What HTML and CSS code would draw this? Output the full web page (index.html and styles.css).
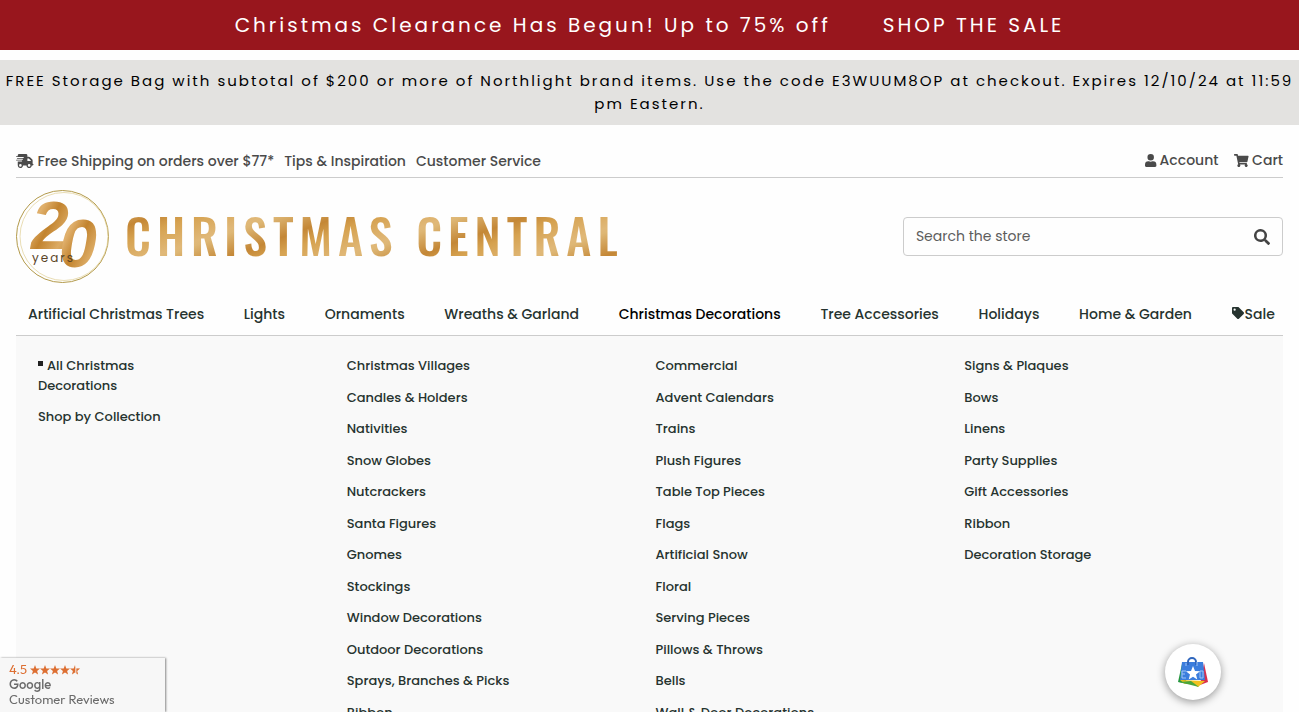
FILE: index.html
```html
<!DOCTYPE html>
<html lang="en">
  <head>
    <meta charset="UTF-8" />
    <meta name="viewport" content="width=device-width, initial-scale=1.0" />
    <title>Christmas Central</title>
    <link rel="stylesheet" href="styles.css">
  </head>
  <body>
    <div class="saleBanner">
      <span>Christmas Clearance Has Begun! Up to 75% off</span>
      <a href="#">SHOP THE SALE</a>
    </div>
    <div class="promoBanner">
      <p>FREE Storage Bag with subtotal of $200 or more of Northlight brand items. Use the code E3WUUM8OP at checkout. Expires 12/10/24 at 11:59 pm Eastern.</p>
    </div>
    <div class="container">
      <div class="topBar">
        <ul class="topLinks">
          <li>
            <a href="#">
              <svg class="truck" viewBox="0 0 640 512" fill="currentColor" aria-hidden="true">
                <path d="M112 0C86 0 64 22 64 48v32H16c-21 0-21 32 0 32h256c21 0 21 32 0 32H48c-21 0-21 32 0 32h192c21 0 21 32 0 32H16c-21 0-21 32 0 32h192c21 0 21 32 0 32H64v128c0 62 43 112 96 112s96-43 96-96h128c0 53 43 96 96 96s96-43 96-96h32c43 0 43-64 0-64V237c0-17-7-33-19-45l-77-77c-12-12-28-19-45-19h-51V48c0-26-22-48-48-48zm432 237v19H416v-96h51zM160 368a48 48 0 1 1 0 96 48 48 0 0 1 0-96zm320 0a48 48 0 1 1 0 96 48 48 0 0 1 0-96z"/>
              </svg>
              Free Shipping on orders over $77*
            </a>
          </li>
          <li><a href="#">Tips &amp; Inspiration</a></li>
          <li><a href="#">Customer Service</a></li>
        </ul>
        <ul class="userLinks">
          <li>
            <a href="#">
              <svg class="user" viewBox="0 0 448 512" fill="currentColor" aria-hidden="true">
                <path d="M224 256a128 128 0 1 0 0-256 128 128 0 0 0 0 256zm90 32h-17a174 174 0 0 1-146 0h-17A134 134 0 0 0 0 422v42c0 27 21 48 48 48h352c27 0 48-21 48-48v-42a134 134 0 0 0-134-134z"/>
              </svg>
              Account
            </a>
          </li>
          <li>
            <a href="#">
              <svg class="cart" viewBox="0 0 576 512" fill="currentColor" aria-hidden="true">
                <path d="M528 301l47-208c4-15-8-29-23-29H159l-9-45C148 8 138 0 127 0H24C11 0 0 11 0 24v16c0 13 11 24 24 24h70l70 343a56 56 0 1 0 67 9h210a56 56 0 1 0 64-11l5-24c4-15-8-29-23-29H218l-7-32h294c11 0 21-8 23-19z"/>
              </svg>
              Cart
            </a>
          </li>
        </ul>
      </div>
      <header>
        <a href="#" class="logo" aria-label="Christmas Central">
          <svg class="seal" viewBox="0 0 93 93">
            <defs>
              <linearGradient id="gold" x1="0" y1="0" x2="1" y2="1">
                <stop offset="0" stop-color="#d09a4c" />
                <stop offset="0.3" stop-color="#e0b06c" />
                <stop offset="0.5" stop-color="#c2832e" />
                <stop offset="0.75" stop-color="#dcab64" />
                <stop offset="1" stop-color="#c58c3c" />
              </linearGradient>
            </defs>
            <circle cx="46.500" cy="46.500" r="46" fill="none" stroke="#b39a4b" />
            <circle cx="48" cy="46.500" r="44" fill="none" stroke="#e0cf93" stroke-width="0.700" />
            <text class="digit" x="15" y="59">2</text>
            <text class="digit" x="43" y="77">0</text>
            <text class="years" x="16" y="72">years</text>
          </svg>
          <span class="wordmark">CHRISTMAS CENTRAL</span>
        </a>
        <form class="search">
          <input type="search" placeholder="Search the store" aria-label="Search the store" />
          <button type="button" aria-label="Search">
            <svg viewBox="0 0 512 512" fill="currentColor">
              <path fill-rule="evenodd" d="M505 443L405 343c-4-4-11-7-17-7h-16a208 208 0 1 0-36 36v16c0 6 3 13 7 17l100 100c9 9 24 9 34 0l28-28c9-10 9-25 0-34zM208 336a128 128 0 1 1 0-256 128 128 0 0 1 0 256z"/>
            </svg>
          </button>
        </form>
      </header>
      <nav>
        <ul>
          <li><a href="#">Artificial Christmas Trees</a></li>
          <li><a href="#">Lights</a></li>
          <li><a href="#">Ornaments</a></li>
          <li><a href="#">Wreaths &amp; Garland</a></li>
          <li class="active"><a href="#">Christmas Decorations</a></li>
          <li><a href="#">Tree Accessories</a></li>
          <li><a href="#">Holidays</a></li>
          <li><a href="#">Home &amp; Garden</a></li>
          <li>
            <a href="#">
              <svg class="tag" viewBox="0 0 512 512" fill="currentColor" aria-hidden="true">
                <path fill-rule="evenodd" d="M0 252V48C0 21 21 0 48 0h204c13 0 25 5 34 14l212 212c19 19 19 49 0 68L294 498c-19 19-49 19-68 0L14 286a48 48 0 0 1-14-34zM112 64a48 48 0 1 0 0 96 48 48 0 0 0 0-96z"/>
              </svg>Sale
            </a>
          </li>
        </ul>
      </nav>
      <div class="megaMenu">
        <ul class="first">
          <li><a href="#" class="all">All Christmas Decorations</a></li>
          <li><a href="#">Shop by Collection</a></li>
        </ul>
        <ul>
          <li><a href="#">Christmas Villages</a></li>
          <li><a href="#">Candles &amp; Holders</a></li>
          <li><a href="#">Nativities</a></li>
          <li><a href="#">Snow Globes</a></li>
          <li><a href="#">Nutcrackers</a></li>
          <li><a href="#">Santa Figures</a></li>
          <li><a href="#">Gnomes</a></li>
          <li><a href="#">Stockings</a></li>
          <li><a href="#">Window Decorations</a></li>
          <li><a href="#">Outdoor Decorations</a></li>
          <li><a href="#">Sprays, Branches &amp; Picks</a></li>
          <li><a href="#">Ribbon</a></li>
        </ul>
        <ul>
          <li><a href="#">Commercial</a></li>
          <li><a href="#">Advent Calendars</a></li>
          <li><a href="#">Trains</a></li>
          <li><a href="#">Plush Figures</a></li>
          <li><a href="#">Table Top Pieces</a></li>
          <li><a href="#">Flags</a></li>
          <li><a href="#">Artificial Snow</a></li>
          <li><a href="#">Floral</a></li>
          <li><a href="#">Serving Pieces</a></li>
          <li><a href="#">Pillows &amp; Throws</a></li>
          <li><a href="#">Bells</a></li>
          <li><a href="#">Wall &amp; Door Decorations</a></li>
        </ul>
        <ul>
          <li><a href="#">Signs &amp; Plaques</a></li>
          <li><a href="#">Bows</a></li>
          <li><a href="#">Linens</a></li>
          <li><a href="#">Party Supplies</a></li>
          <li><a href="#">Gift Accessories</a></li>
          <li><a href="#">Ribbon</a></li>
          <li><a href="#">Decoration Storage</a></li>
        </ul>
      </div>
    </div>
    <a href="#" class="reviews">
      <span class="rating">
        4.5
        <svg viewBox="0 0 50 10" fill="currentColor" aria-hidden="true">
          <path id="star" d="M5 0l1.300 3.500 3.700.100-2.900 2.300 1 3.600L5 7.400 1.900 9.500l1-3.600L0 3.600l3.700-.100z"/>
          <use href="#star" x="10" />
          <use href="#star" x="20" />
          <use href="#star" x="30" />
          <path d="M45 0v7.400l-3.100 2.100 1-3.600L40 3.600l3.700-.100z"/>
          <path d="M45 0l1.300 3.500 3.700.100-2.900 2.300 1 3.600L45 7.400z" opacity="0.350" />
          <path d="M46.500 3.500l3.500.100-2.900 2.300 1 3.600-1.600-1z"/>
        </svg>
      </span>
      <span class="google">Google</span>
      <span>Customer Reviews</span>
    </a>
    <button class="rewards" type="button" aria-label="Store rating">
      <svg viewBox="0 0 30 30">
        <path d="M4 7L0 25l9 2z" fill="#25973f" />
        <path d="M26 6l4 19-8 3z" fill="#d9304c" />
        <path d="M2 23l5 4 4-2 9 5 7-6z" fill="#f2c21f" />
        <path d="M1 25l12-1 8 6z" fill="#4aa63c" />
        <path d="M4 5h21l2 18H2z" fill="#3b7ddd" />
        <path d="M10 8V5a4 4 0 0 1 8 0v3" fill="none" stroke="#2f66bd" stroke-width="2" />
        <path d="M8 6v3M19 5v4M4 14v7h4M4 14h4M4 17h3M22 14h3v7h-3z" fill="none" stroke="#9fc4f5" />
        <path d="M15 9l2 5 5 .300-4 3.200 1.300 5L15 19.700l-4.300 2.800 1.300-5-4-3.200 5-.300z" fill="#fff" />
      </svg>
    </button>
  </body>
</html>
```
FILE: styles.css
```css
* {
  box-sizing: border-box;
  margin: 0;
  padding: 0;
}
body {
  font-family: Poppins, Inter, sans-serif;
  font-size: 14px;
  color: #4a4a4a;
  background-color: #fefefe;
}
a {
  color: inherit;
  text-decoration: none;
}
ul {
  list-style: none;
}
.saleBanner {
  display: flex;
  justify-content: center;
  gap: 52px;
  padding: 10px;
  margin-bottom: 10px;
  font-size: 20px;
  line-height: 30px;
  letter-spacing: 3px;
  color: #ffffff;
  background-color: #98161d;
}
.promoBanner {
  padding: 9px 4px 10px;
  font-size: 15px;
  line-height: 23px;
  letter-spacing: 2px;
  text-align: center;
  color: #000000;
  background-color: #e3e2e0;
}
.container {
  padding: 0 16px;
}
.topBar {
  display: flex;
  justify-content: space-between;
  padding-top: 24px;
  height: 53px;
  border-bottom: 1px solid #cccccc;
  font-weight: 500;
  line-height: 24px;
}
.topLinks,
.userLinks {
  display: flex;
  gap: 10px;
}
.userLinks {
  gap: 16px;
  line-height: 22px;
}
.topBar a {
  display: flex;
  align-items: center;
  gap: 4px;
}
.userLinks a {
  gap: 3px;
}
.topBar svg {
  height: 14px;
}
.topBar .user,
.topBar .cart {
  height: 13px;
}
header {
  display: flex;
  justify-content: space-between;
  align-items: center;
  padding: 12px 0 10px;
}
.logo {
  display: flex;
  align-items: center;
  gap: 16px;
}
.seal {
  width: 93px;
  height: 93px;
}
.digit {
  font: italic bold 68px "Liberation Sans", sans-serif;
  fill: url(#gold);
}
.years {
  font-size: 12px;
  letter-spacing: 2px;
  fill: #5a4426;
}
.wordmark {
  padding-bottom: 4px;
  font-family: Oswald, Roboto, sans-serif;
  font-size: 48px;
  font-weight: 500;
  line-height: 64px;
  letter-spacing: 6px;
  white-space: nowrap;
  color: transparent;
  background: repeating-linear-gradient(160deg, #deb775 0, #c48736 22px, #d6a250 36px, #e0b878 60px, #deb775 64px);
  background-clip: text;
  -webkit-background-clip: text;
}
.search {
  display: flex;
  align-items: center;
  width: 30%;
  height: 39px;
  padding: 0 12px;
  border: 1px solid #cccccc;
  border-radius: 4px;
}
.search input {
  flex: 1;
  min-width: 0;
  border: none;
  outline: none;
  background: none;
  font: inherit;
}
.search input::placeholder {
  color: #5c5c5c;
}
.search button {
  display: flex;
  border: none;
  background: none;
  color: #444444;
}
.search svg {
  width: 16px;
  height: 16px;
}
nav {
  border-bottom: 1px solid #cccccc;
}
nav ul {
  display: flex;
  justify-content: space-between;
  padding: 10px 8px 10px 12px;
  font-weight: 500;
  line-height: 22px;
  color: #26332f;
}
nav .active {
  color: #000000;
}
.tag {
  width: 12px;
  height: 12px;
  margin-right: 1px;
}
.megaMenu {
  display: grid;
  grid-template-columns: repeat(4, 1fr);
  padding: 20px 16px;
  font-size: 13px;
  font-weight: 500;
  line-height: 1.5;
  color: #26332f;
  background-color: #f9f9f9;
}
.megaMenu li {
  padding: 0 6px 12px;
}
.megaMenu .first {
  max-width: 144px;
}
.all::before {
  content: "";
  display: inline-block;
  width: 5px;
  height: 5px;
  margin-right: 4px;
  vertical-align: 4px;
  background-color: #222222;
}
.reviews {
  position: fixed;
  left: 0;
  bottom: 0;
  display: flex;
  flex-direction: column;
  width: 165px;
  padding: 4px 9px 5px;
  font-family: Outfit, "Open Sans", sans-serif;
  font-size: 13px;
  line-height: 15px;
  color: #6b6b6b;
  background-color: #f7f7f7;
  box-shadow: 1px 0 2px #888888;
}
.rating {
  display: flex;
  align-items: center;
  gap: 3px;
  color: #dd6f32;
}
.rating svg {
  width: 50px;
  height: 10px;
}
.google {
  font-weight: 500;
}
.rewards {
  position: fixed;
  right: 78px;
  bottom: 12px;
  display: flex;
  align-items: center;
  justify-content: center;
  width: 56px;
  height: 56px;
  border: none;
  border-radius: 50%;
  background-color: #ffffff;
  box-shadow: 0 2px 8px #00000066;
}
.rewards svg {
  width: 30px;
  height: 30px;
}
```
